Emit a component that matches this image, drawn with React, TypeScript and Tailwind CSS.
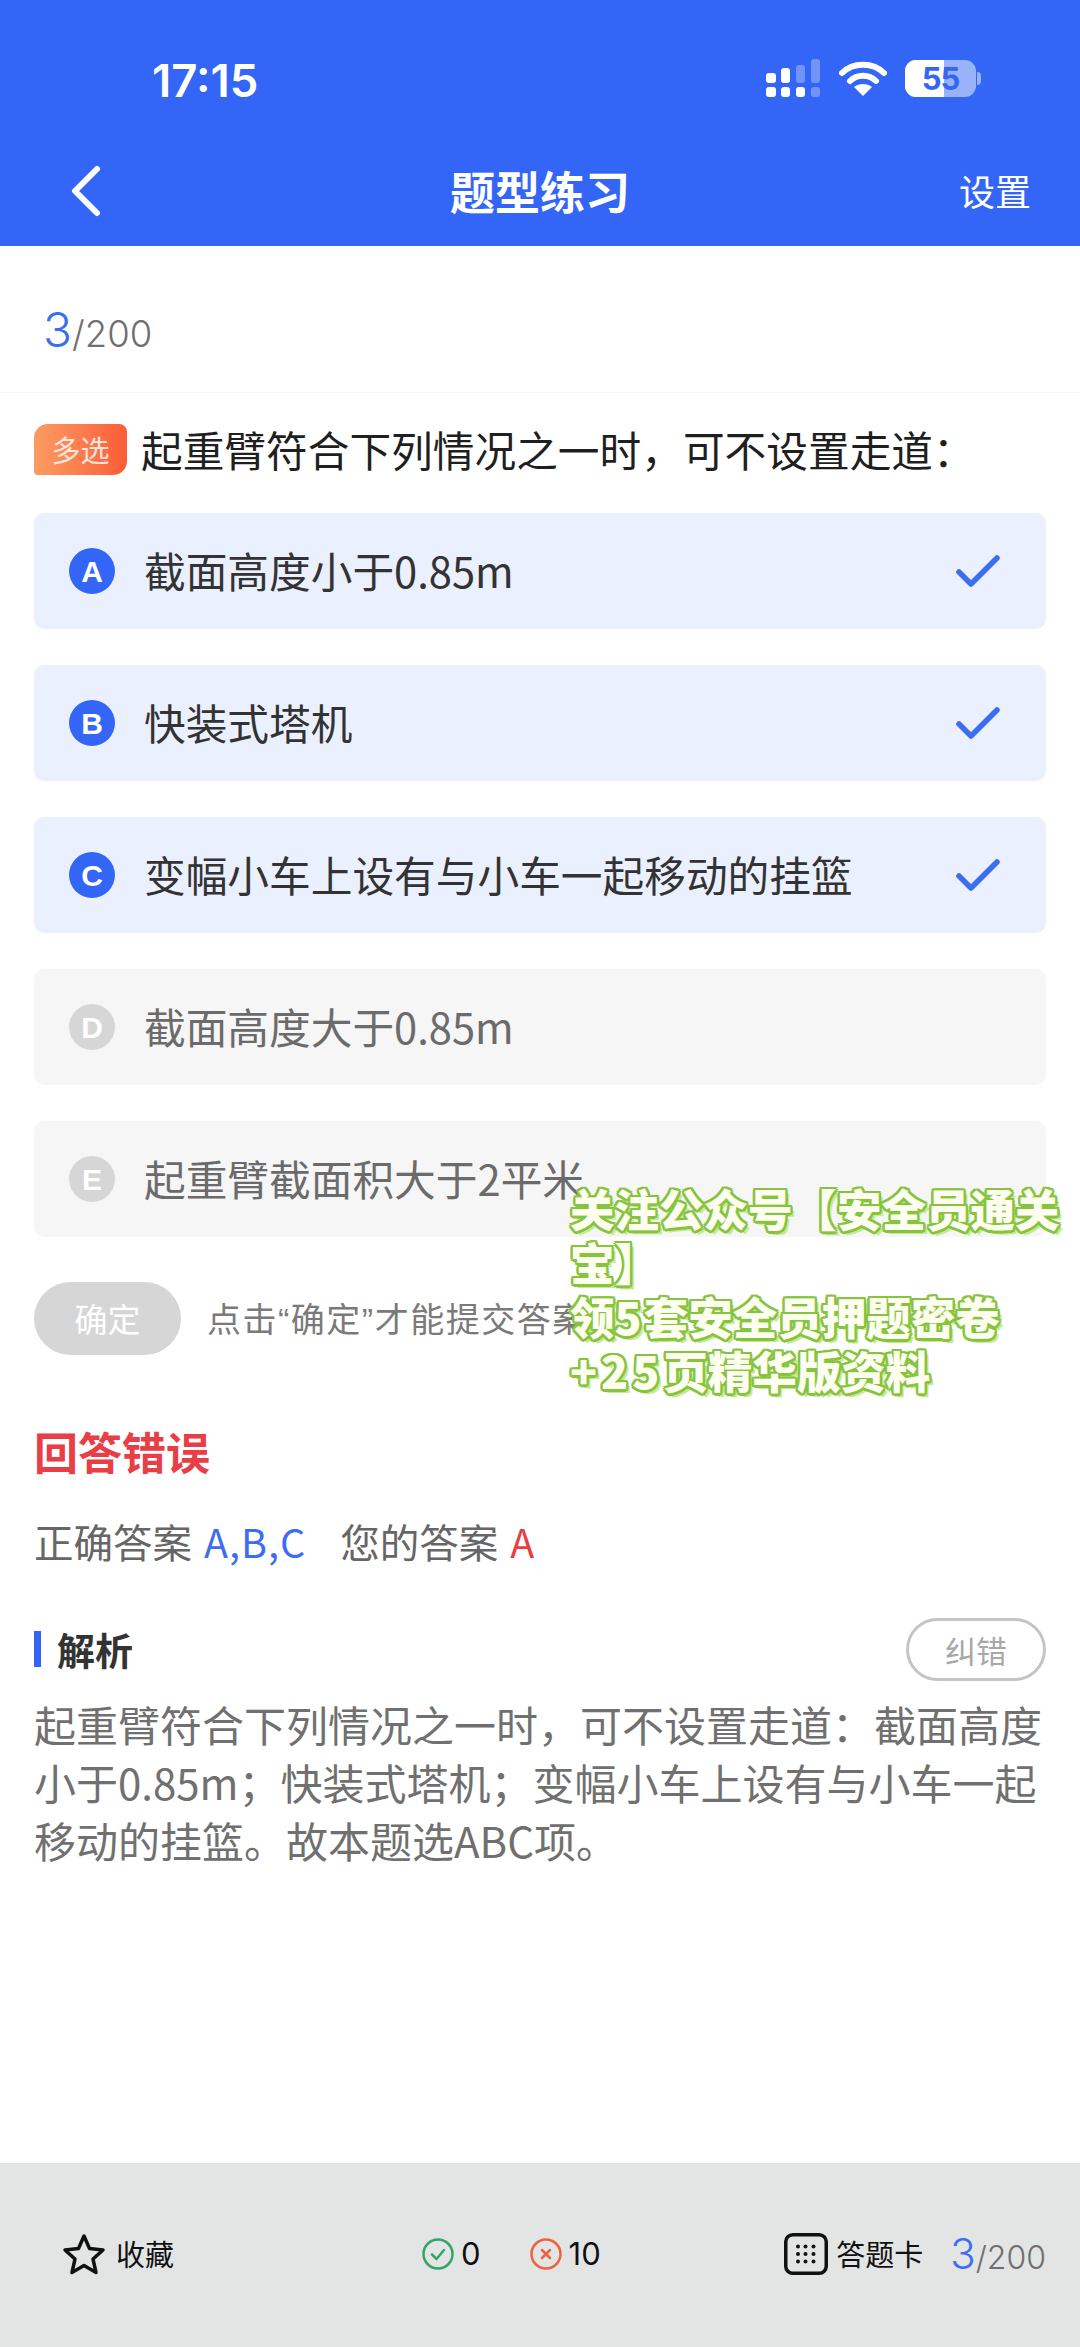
import React from "react";

const font = { fontFamily: '"Noto Sans CJK SC", "Noto Sans", sans-serif' };
const latin = { fontFamily: '"Liberation Sans", sans-serif' };

function Check() {
  return (
    <svg width="44" height="34" viewBox="0 0 44 34" fill="none" className="block">
      <path d="M3 18 L15 30 L41 4" stroke="#3d6ef0" strokeWidth="5.5" strokeLinecap="round" strokeLinejoin="round" />
    </svg>
  );
}

function Option({ letter, text, on }: { letter: string; text: string; on: boolean }) {
  return (
    <div className={`flex h-[116px] items-center rounded-[10px] pl-[35px] pr-[46px] ${on ? "bg-[#ebf0fe]" : "bg-[#f6f6f6]"}`}>
      <div
        className={`flex h-[46px] w-[46px] shrink-0 items-center justify-center rounded-full text-[30px] font-bold text-white ${on ? "bg-[#3366f6]" : "bg-[#d6d6d6]"}`}
        style={latin}
      >
        {letter}
      </div>
      <div className={`ml-[29px] flex-1 text-[41.7px] leading-none ${on ? "text-[#333]" : "text-[#6b6b6b]"}`}>{text}</div>
      {on && <Check />}
    </div>
  );
}

function Progress({ small }: { small?: boolean }) {
  return (
    <div className="flex items-baseline" style={{ fontFamily: '"Inter", sans-serif' }}>
      <span className={`font-light leading-none text-[#3d6ef0] ${small ? "text-[42px]" : "text-[48px]"}`}>3</span>
      <span className={`font-light leading-none text-[#6f6f6f] ${small ? "text-[32px]" : "text-[36.5px]"}`}>/200</span>
    </div>
  );
}

export default function App() {
  return (
    <div className="relative flex h-[2347px] w-[1080px] flex-col overflow-hidden bg-white" style={font}>
      {/* Blue header */}
      <header className="h-[246px] shrink-0 bg-[#3366f6] text-white">
        <div className="flex h-[150px] items-start justify-between pl-[152px] pr-[99px] pt-[52px]">
          <span className="text-[45.5px] font-semibold leading-[58px]" style={{ fontFamily: '"Inter", sans-serif' }}>17:15</span>
          <div className="flex items-center pt-[7px]">
            <svg width="54" height="38" viewBox="0 0 54 38" fill="white" className="block">
              <rect x="0" y="14" width="10" height="10" rx="3" />
              <rect x="15" y="9" width="9" height="15" rx="3" />
              <rect x="30" y="6" width="9" height="18" rx="3" opacity=".3" />
              <rect x="45" y="0" width="9" height="24" rx="3" opacity=".3" />
              <rect x="0" y="28" width="10" height="10" rx="3" />
              <rect x="15" y="28" width="9" height="10" rx="3" />
              <rect x="30" y="28" width="9" height="10" rx="3" />
              <rect x="45" y="28" width="9" height="10" rx="3" opacity=".3" />
            </svg>
            <svg width="48" height="36" viewBox="0 0 48 36" fill="none" className="ml-[19px] block">
              <path d="M3 13 C14 2 34 2 45 13" stroke="white" strokeWidth="6" strokeLinecap="round" />
              <path d="M11 21 C18 14 30 14 37 21" stroke="white" strokeWidth="6" strokeLinecap="round" />
              <path d="M24 36 L15 27 C20 23 28 23 33 27 Z" fill="white" />
            </svg>
            <div className="relative ml-[18px] flex h-[37px] w-[71px] items-center justify-center overflow-hidden rounded-[11px] bg-white/50">
              <div className="absolute inset-y-0 left-0 w-[39px] bg-white" />
              <span className="relative text-[31px] font-bold leading-none tracking-[-1px] text-[#3366f6]" style={{ fontFamily: '"Inter", sans-serif' }}>55</span>
            </div>
            <div className="ml-[1px] h-[13px] w-[4px] rounded-r-full bg-white/50" />
          </div>
        </div>
        <div className="relative flex h-[82px] items-center justify-center pb-[2px]">
          <svg width="34" height="52" viewBox="0 0 34 52" fill="none" className="absolute left-[69px] top-[15px]">
            <path d="M28 4 L6 26 L28 48" stroke="white" strokeWidth="6" strokeLinecap="round" strokeLinejoin="round" />
          </svg>
          <span className="text-[45px] font-semibold leading-none">题型练习</span>
          <span className="absolute right-[49px] top-[22px] text-[36px] leading-none">设置</span>
        </div>
      </header>

      {/* Progress */}
      <div className="flex h-[147px] shrink-0 items-center border-b border-[#f5f5f5] pl-[43px] pt-[22px]">
        <Progress />
      </div>

      {/* Question */}
      <main className="flex-1 px-[34px]">
        <div className="flex items-center pt-[31px]">
          <div className="flex h-[51px] w-[93px] items-center justify-center rounded-tl-[14px] rounded-tr-[8px] rounded-br-[14px] rounded-bl-[4px] bg-gradient-to-r from-[#fb9b62] to-[#fb5b37] text-[29px] leading-none text-white/80">
            多选
          </div>
          <div className="ml-[14px] text-[41.7px] leading-none text-[#1f1f1f]">起重臂符合下列情况之一时，可不设置走道：</div>
        </div>

        <div className="mt-[38px] flex flex-col gap-[36px]">
          <Option letter="A" text="截面高度小于0.85m" on />
          <Option letter="B" text="快装式塔机" on />
          <Option letter="C" text="变幅小车上设有与小车一起移动的挂篮" on />
          <Option letter="D" text="截面高度大于0.85m" on={false} />
          <Option letter="E" text="起重臂截面积大于2平米" on={false} />
        </div>

        <div className="mt-[45px] flex items-center">
          <div className="flex h-[73px] w-[147px] items-center justify-center rounded-full bg-[#d6d6d6] text-[33px] leading-none text-white">确定</div>
          <div className="ml-[26px] text-[34px] leading-none tracking-[1.5px] text-[#7a7a7a]">
            点击<span style={latin}>“</span>确定<span style={latin}>”</span>才能提交答案
          </div>
        </div>

        <div className="mt-[74px] text-[44px] font-semibold leading-none text-[#e83e46]">回答错误</div>

        <div className="mt-[48px] flex items-center text-[39.5px] leading-none text-[#666]">
          <span>正确答案</span>
          <span className="ml-[12px] tracking-[1px] text-[#3d6ef0]">A,B,C</span>
          <span className="ml-[34px]">您的答案</span>
          <span className="ml-[12px] text-[#e83e46]">A</span>
        </div>

        <div className="mt-[57px] flex items-center justify-between">
          <div className="flex items-center">
            <div className="h-[36px] w-[7px] bg-[#3366f6]" />
            <span className="ml-[16px] text-[38px] font-semibold leading-none text-[#333]">解析</span>
          </div>
          <div className="flex h-[63px] w-[140px] items-center justify-center rounded-full border-[3px] border-[#c4c4c4] text-[31px] leading-none text-[#a8a8a8]">纠错</div>
        </div>

        <p className="mt-[14px] text-[42px] leading-[58px] text-[#707070]">
          起重臂符合下列情况之一时，可不设置走道：截面高度小于0.85m；快装式塔机；变幅小车上设有与小车一起移动的挂篮。故本题选ABC项。
        </p>
      </main>

      {/* Bottom bar */}
      <footer className="flex h-[184px] shrink-0 items-center bg-[#e3e4e4] pb-[3px] pl-[62px] pr-[34px] text-[#111]">
        <svg width="44" height="42" viewBox="0 0 44 42" fill="none" className="block">
          <path d="M22 3 L27.5 15.5 L41 17 L31 26 L34 39.5 L22 32.5 L10 39.5 L13 26 L3 17 L16.5 15.5 Z" stroke="#111" strokeWidth="3.5" strokeLinejoin="round" />
        </svg>
        <span className="ml-[10px] text-[29px] leading-none">收藏</span>

        <svg width="32" height="32" viewBox="0 0 32 32" fill="none" className="ml-[248px] block">
          <circle cx="16" cy="16" r="14.5" stroke="#33a56a" strokeWidth="2.5" />
          <path d="M10 16.5 L14.5 21 L22 12" stroke="#33a56a" strokeWidth="2.5" strokeLinecap="round" strokeLinejoin="round" />
        </svg>
        <span className="ml-[7px] text-[31px] leading-none" style={{ fontFamily: '"Inter", sans-serif' }}>0</span>

        <svg width="32" height="32" viewBox="0 0 32 32" fill="none" className="ml-[49px] block">
          <circle cx="16" cy="16" r="14.5" stroke="#ee6240" strokeWidth="2.5" />
          <path d="M12 12 L20 20 M20 12 L12 20" stroke="#ee6240" strokeWidth="2.5" strokeLinecap="round" />
        </svg>
        <span className="ml-[7px] text-[31px] leading-none" style={{ fontFamily: '"Inter", sans-serif' }}>10</span>

        <div className="ml-auto flex items-center">
          <svg width="44" height="42" viewBox="0 0 44 42" fill="#111" className="block">
            <rect x="1.75" y="1.75" width="40.5" height="38.5" rx="7" fill="none" stroke="#111" strokeWidth="3.5" />
            {[12, 19.5, 27].map((y) =>
              [12, 19.5, 27.5].map((x) => <circle key={`${x}-${y}`} cx={x + 2} cy={y + 1.5} r="2" />)
            )}
          </svg>
          <span className="ml-[8px] text-[29px] leading-none">答题卡</span>
          <div className="ml-[27px]">
            <Progress small />
          </div>
        </div>
      </footer>

      {/* Promotional overlay lying over the page */}
      <div
        className="absolute left-[570px] top-[1181px] w-[500px] text-[44.5px] font-black leading-[54px] text-[#fdfdf0] [text-shadow:2.5px_0_0_#86c440,-2.5px_0_0_#86c440,0_2.5px_0_#86c440,0_-2.5px_0_#86c440,2px_2px_0_#86c440,-2px_2px_0_#86c440,2px_-2px_0_#86c440,-2px_-2px_0_#86c440,4px_4px_0_#c8ea8c]"
      >
        关注公众号【安全员通关宝】
        <br />
        领<span className="tracking-[2px]">5</span>套安全员押题密卷
        <br />
        <span className="tracking-[4px]">+25</span>页精华版资料
      </div>
    </div>
  );
}
